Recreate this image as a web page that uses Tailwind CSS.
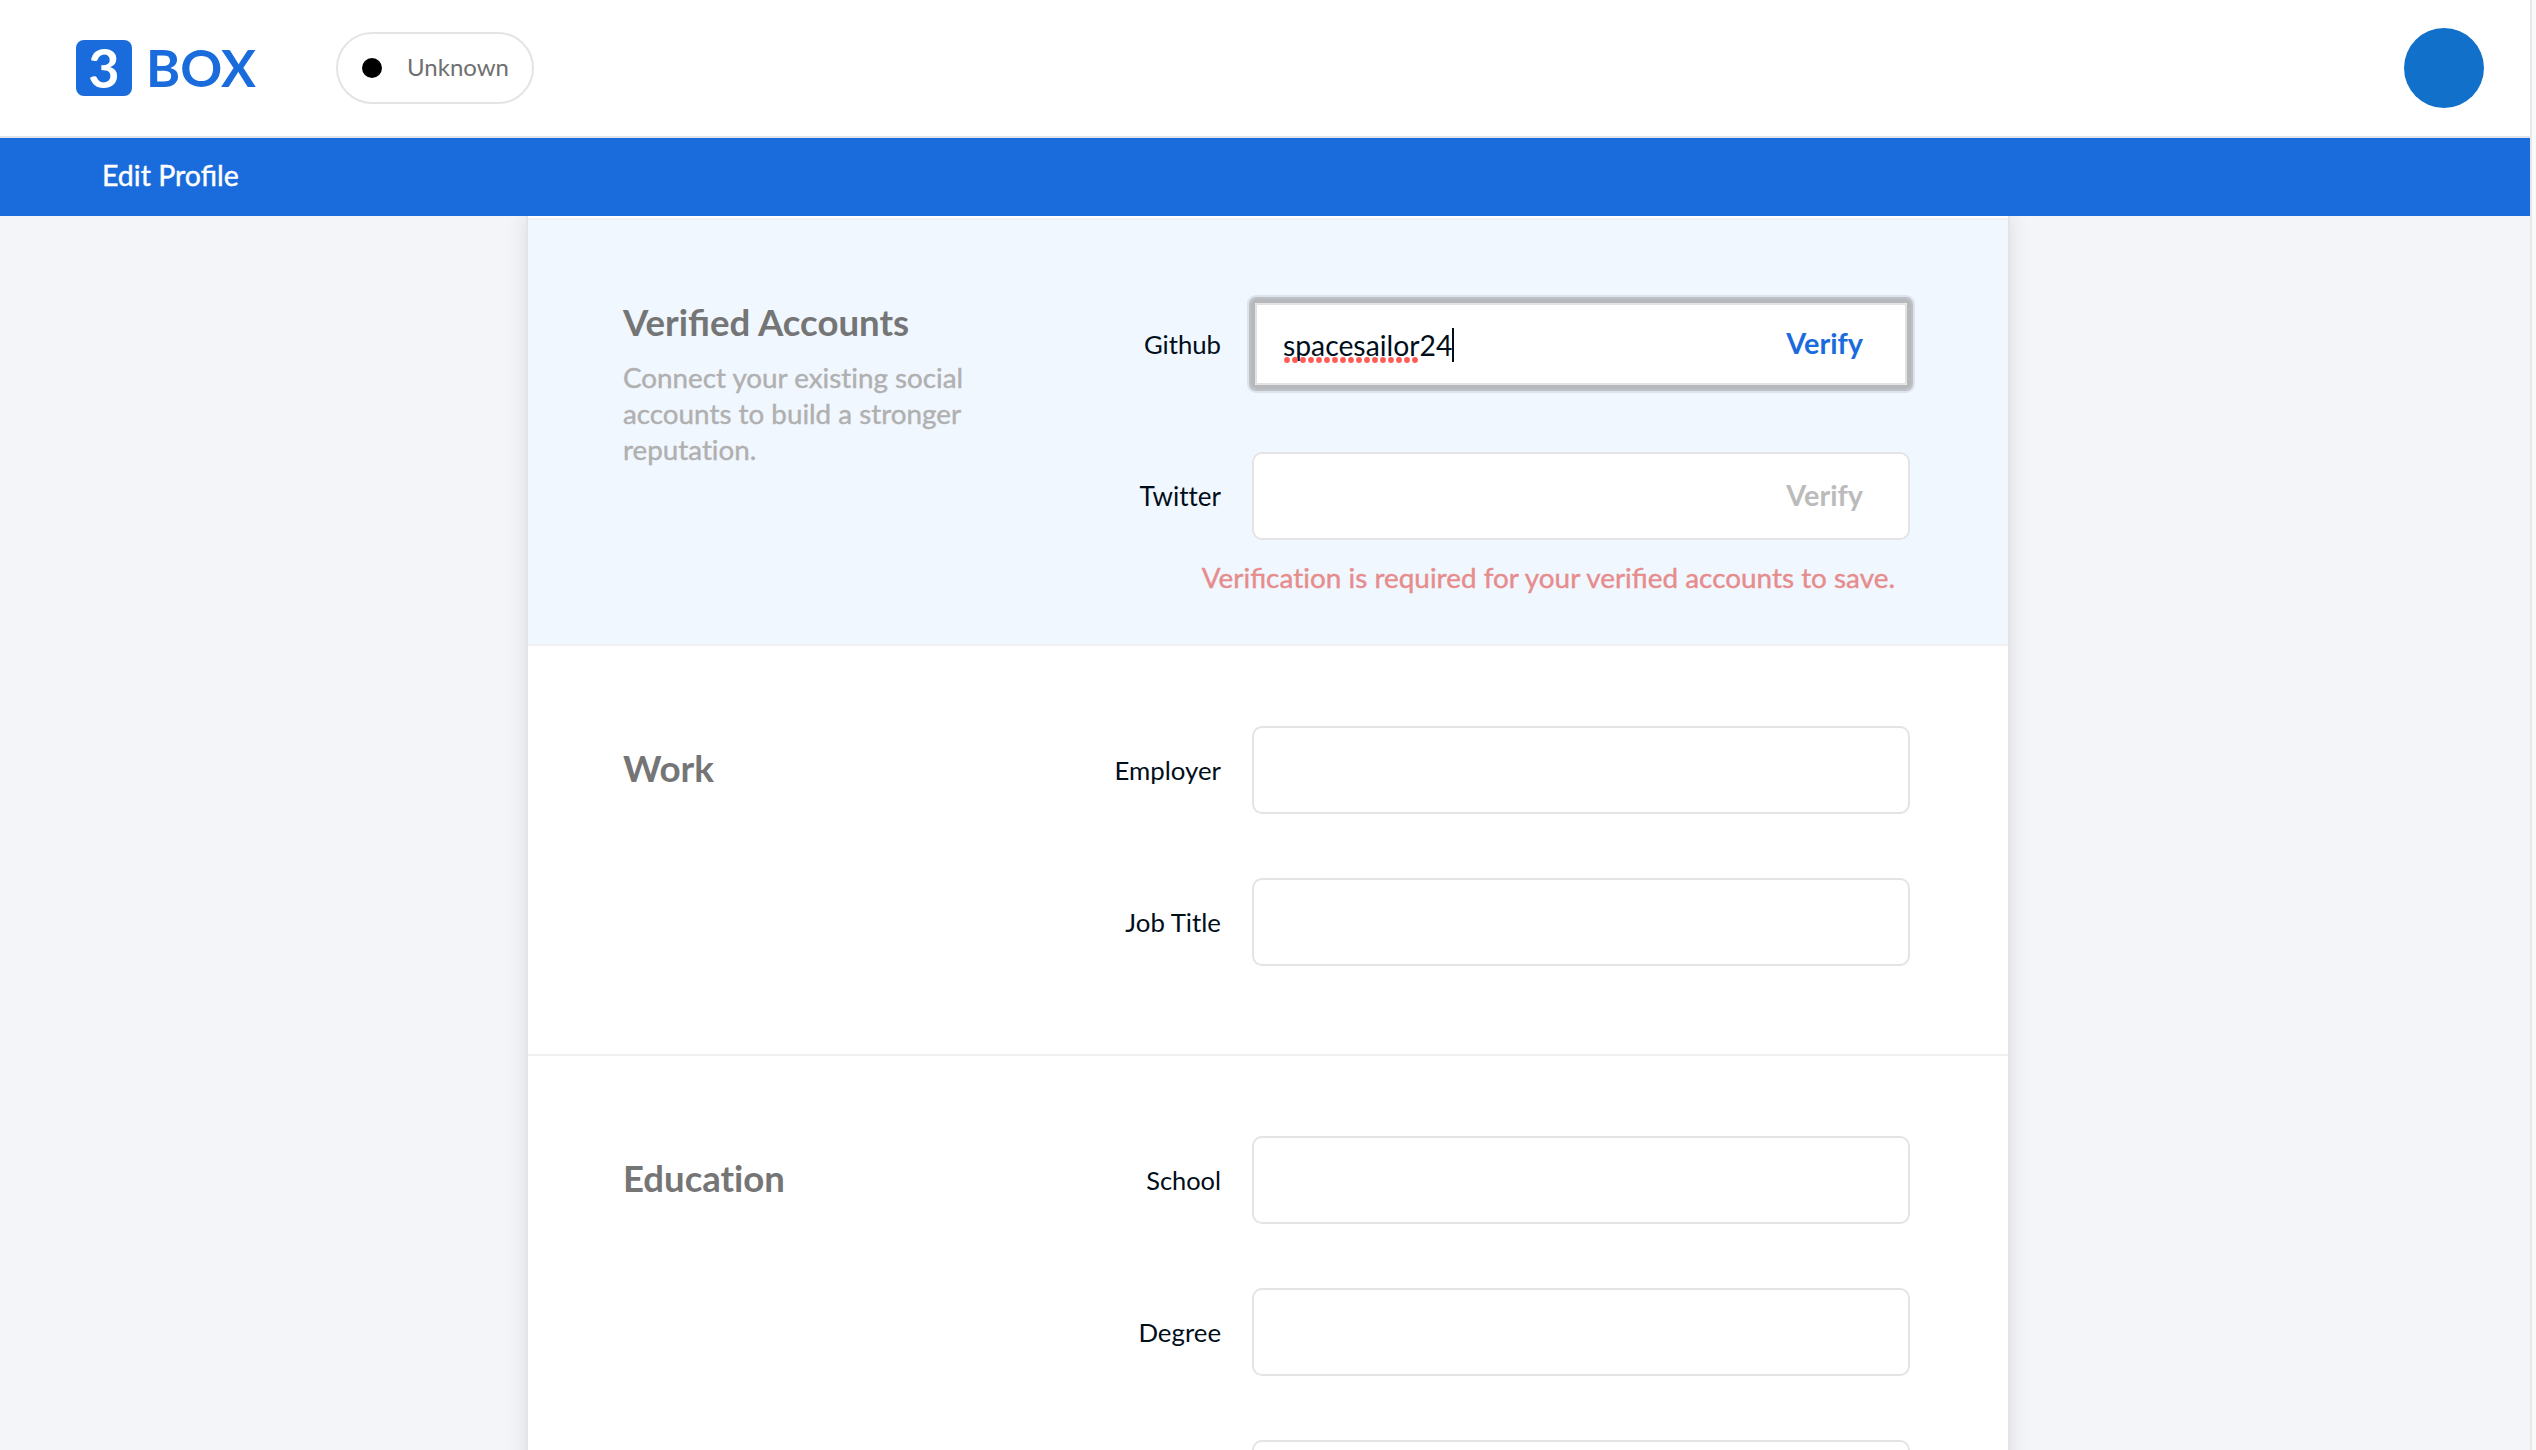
<!DOCTYPE html>
<html lang="en">
<head>
<meta charset="utf-8">
<title>Edit Profile</title>
<script src="https://cdn.jsdelivr.net/npm/@tailwindcss/browser@4"></script>
</head>
<body class="w-[2536px] h-[1450px] overflow-hidden flex bg-[#fafafa] font-['Lato',sans-serif] text-[#000e1a]">
<div class="w-[2530px] h-[1450px] flex flex-col bg-[#f4f5f8] overflow-hidden">
  <header class="h-[138px] shrink-0 flex items-center bg-white border-b-2 border-[#e1e4e8] pl-[76px] pr-[46px]">
    <div class="size-14 rounded-lg bg-[#1a6bdc] text-white flex items-center justify-center text-[54px] leading-[56px] font-bold">3</div>
    <div class="ml-[14px] w-[109px] pb-0.5 text-[#1a6bdc] text-[52px] leading-[56px] font-bold">BOX</div>
    <div class="ml-[81px] w-[198px] h-[72px] rounded-full border-2 border-[#e4e4e4] flex items-center pl-6">
      <div class="size-5 rounded-full bg-black"></div>
      <div class="ml-[25px] pb-0.5 text-2xl text-[#6f6f6f]">Unknown</div>
    </div>
    <div class="ml-auto size-20 rounded-full bg-[#1070ca]"></div>
  </header>
  <nav class="h-[78px] shrink-0 bg-[#1a6bdc] text-white text-[28.5px] leading-[74px] pl-[102px] relative z-10 [-webkit-text-stroke:0.4px]">Edit Profile</nav>
  <main class="w-[1484px] ml-[526px] h-[1400px] shrink-0 bg-white border-x-2 border-[#e4e4e6] shadow-[0_0_20px_rgba(10,10,40,0.11)] pt-0.5">
    <section class="h-[428px] bg-[#f0f7ff] border-y-2 border-[#f0f0f0] flex pl-[95px]">
      <div class="w-[380px] pt-20">
        <h2 class="text-[36.6px] leading-[44px] font-bold text-[#757575]">Verified Accounts</h2>
        <p class="mt-4 text-[27.8px] leading-9 text-[#b0b0b0] [font-variant-ligatures:none] [-webkit-text-stroke:0.4px]">Connect your existing social<br>accounts to build a stronger<br>reputation.</p>
      </div>
      <div class="w-[907px] pt-20 flex flex-col items-end">
        <div class="flex items-center">
          <label class="text-[25.7px] mr-[31px]">Github</label>
          <div class="relative w-[658px] h-[88px] bg-white rounded-lg flex items-center justify-between pl-[31px] pr-[47px]">
            <div class="absolute -left-[5px] -top-[5px] w-[668px] h-[98px] rounded-[9px] border-2 border-[#dce3ed]"></div>
            <div class="absolute -left-[3px] -top-[3px] w-[664px] h-[94px] rounded-[7px] border-2 border-[#bdc1c7]"></div>
            <div class="absolute -left-px -top-px w-[660px] h-[90px] rounded-[5px] border-4 border-[#b7b8bb]"></div>
            <div class="absolute left-[3px] top-[3px] w-[652px] h-[82px] rounded-[3px] border-2 border-[#e2e2e2]"></div>
            <div class="relative flex items-center text-[28.3px] pt-0.5">spacesailor24<span class="w-0.5 h-[34px] bg-[#000e1a]"></span>
              <svg class="absolute left-px top-[35px]" width="136" height="6"><line x1="3" y1="3" x2="134" y2="3" stroke="#ff5a55" stroke-width="5.8" stroke-linecap="round" stroke-dasharray="0 8"/></svg>
            </div>
            <span class="pb-px text-[28.8px] font-bold text-[#1a6bdc]">Verify</span>
          </div>
        </div>
        <div class="flex items-center mt-16">
          <label class="text-[26px] mr-[31px] [font-variant-ligatures:none]">Twitter</label>
          <div class="w-[658px] h-[88px] bg-white rounded-[10px] border-2 border-[#e4e4e4] flex items-center justify-end pr-[45px]">
            <span class="pb-px text-[28.8px] font-bold text-[#bbb]">Verify</span>
          </div>
        </div>
        <p class="mt-[17px] mr-[15px] text-[27.9px] leading-10 text-[#e78c8c] [-webkit-text-stroke:0.4px]">Verifica<span class="[font-variant-ligatures:none]">tion</span> is required for your verified accounts to save.</p>
      </div>
    </section>
    <section class="h-[410px] border-b-2 border-[#f0f0f0] flex pl-[95px]">
      <h2 class="w-[380px] pt-[100px] text-[36.8px] leading-[44px] font-bold text-[#757575]">Work</h2>
      <div class="w-[907px] pt-20 flex flex-col items-end gap-16">
        <div class="flex items-center"><label class="text-[25.8px] mr-[31px]">Employer</label><div class="w-[658px] h-[88px] bg-white rounded-[10px] border-2 border-[#e4e4e4]"></div></div>
        <div class="flex items-center"><label class="text-[25.8px] mr-[31px] [font-variant-ligatures:none]">Job Title</label><div class="w-[658px] h-[88px] bg-white rounded-[10px] border-2 border-[#e4e4e4]"></div></div>
      </div>
    </section>
    <section class="flex pl-[95px]">
      <h2 class="w-[380px] pt-[100px] text-[36.5px] leading-[44px] font-bold text-[#757575] [font-variant-ligatures:none]">Education</h2>
      <div class="w-[907px] pt-20 flex flex-col items-end gap-16">
        <div class="flex items-center"><label class="text-[25.4px] mr-[31px]">School</label><div class="w-[658px] h-[88px] bg-white rounded-[10px] border-2 border-[#e4e4e4]"></div></div>
        <div class="flex items-center"><label class="text-[25.8px] mr-[31px]">Degree</label><div class="w-[658px] h-[88px] bg-white rounded-[10px] border-2 border-[#e4e4e4]"></div></div>
        <div class="w-[658px] h-[88px] bg-white rounded-[10px] border-2 border-[#e4e4e4]"></div>
      </div>
    </section>
  </main>
</div>
<div class="w-0.5 h-[1450px] bg-[#e8e8e8]"></div>
</body>
</html>
